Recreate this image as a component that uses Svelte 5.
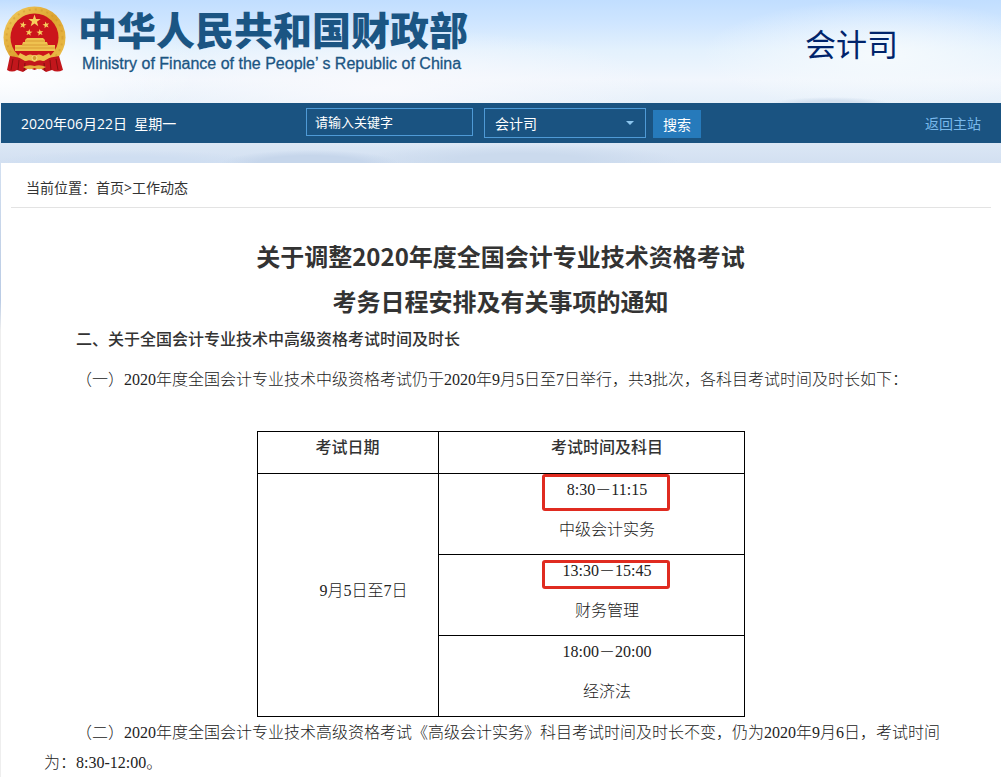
<script>
  const star = (cx, cy, r, turn = 0) =>
    Array.from({ length: 10 }, (_, i) => {
      const a = ((turn + i * 36 - 90) * Math.PI) / 180;
      const d = i % 2 ? r * 0.4 : r;
      return `${(cx + d * Math.cos(a)).toFixed(2)},${(cy + d * Math.sin(a)).toFixed(2)}`;
    }).join(' ');

  const stars = [
    star(31.5, 15, 6.5),
    star(20, 19, 3.6, 12),
    star(43, 19, 3.6, -12),
    star(26, 26.5, 3.6, 8),
    star(37, 26.5, 3.6, -8)
  ];

  const sessions = [
    { time: '8:30－11:15', subject: '中级会计实务', mark: 'tall' },
    { time: '13:30－15:45', subject: '财务管理', mark: 'short' },
    { time: '18:00－20:00', subject: '经济法', mark: '' }
  ];
</script>

<div class="page">
  <header class="banner">
    <svg class="emblem" viewBox="0 0 64 68" aria-hidden="true">
      <defs>
        <linearGradient id="gold" x1="0" y1="0" x2="1" y2="1">
          <stop offset="0" stop-color="#f3cf62" />
          <stop offset="0.5" stop-color="#dda32f" />
          <stop offset="1" stop-color="#f0c650" />
        </linearGradient>
      </defs>
      <circle cx="31.5" cy="31.5" r="31" fill="url(#gold)" />
      <circle cx="31.5" cy="31.5" r="28" fill="none" stroke="#c78722" stroke-width="2" stroke-dasharray="2 4" opacity="0.35" />
      <circle cx="31.5" cy="31.5" r="24" fill="#cb141b" />
      {#each stars as points}
        <polygon {points} fill="#f6cf5d" />
      {/each}
      <path d="M22 34 L24 32 H40 L42 34 V36 H44 L45 39 H52 V45 H12 V39 H19 L20 36 H22Z" fill="#efc250" />
      <path d="M22 35 H42 M19 39 H45 M12 42 H52" stroke="#c98424" stroke-width="0.6" />
      <path d="M7 50 L18 52 L23 55 L31.5 53 L40 55 L45 52 L56 50 L60 64 Q54 67 49 64 L43 66 L37 62 L31.5 64 L26 62 L20 66 L14 64 Q9 67 4 64Z" fill="#c2161c" />
      <path d="M10 53 L8 64 M16 54 L15 64 M22 57 L21 65 M41 57 L42 65 M47 54 L48 64 M53 53 L55 64" stroke="#86100f" stroke-width="1" />
      <path d="M17 47 L23 50 Q27 47 31.5 50 Q36 47 40 50 L46 47 L48 51 L41 55 Q36 53 31.5 56 Q27 53 22 55 L15 51Z" fill="#edbf4d" />
      <path d="M20 61 Q26 58 31.5 60 Q37 58 43 61 Q37 65 31.5 62 Q26 65 20 61Z" fill="#e3ad3c" />
      <circle cx="31.5" cy="52" r="2.5" fill="#d39a30" stroke="#f8dc80" />
    </svg>
    <div class="brand">
      <div class="name">中华人民共和国财政部</div>
      <div class="english">Ministry of Finance of the People’ s Republic of China</div>
    </div>
    <div class="department">会计司</div>
  </header>

  <div class="toolbar">
    <div class="date">2020年06月22日&nbsp; 星期一</div>
    <form class="search" onsubmit={(e) => e.preventDefault()}>
      <input type="text" placeholder="请输入关键字" aria-label="请输入关键字" />
      <div class="picker">
        <select aria-label="会计司">
          <option>会计司</option>
        </select>
        <svg viewBox="0 0 8 4" aria-hidden="true"><path d="M0 0H8L4 4Z" fill="#8cc5ee" /></svg>
      </div>
      <button type="submit">搜索</button>
    </form>
    <a class="back" href="#top">返回主站</a>
  </div>

  <main>
    <nav>当前位置：<a href="#home">首页</a>&gt;<a href="#news">工作动态</a></nav>
    <article>
      <h1>关于调整2020年度全国会计专业技术资格考试<br />考务日程安排及有关事项的通知</h1>
      <h2>二、关于全国会计专业技术中高级资格考试时间及时长</h2>
      <p class="intro">（一）2020年度全国会计专业技术中级资格考试仍于2020年9月5日至7日举行，共3批次，各科目考试时间及时长如下：</p>
      <table>
        <thead>
          <tr><th class="day">考试日期</th><th class="indent">考试时间及科目</th></tr>
        </thead>
        <tbody>
          {#each sessions as s, i}
            <tr>
              {#if i === 0}
                <td class="indent" rowspan="3"><div>9月5日至7日</div></td>
              {/if}
              <td class="indent">
                <div class="time">{s.time}{#if s.mark}<span class="mark {s.mark}"></span>{/if}</div>
                <div>{s.subject}</div>
              </td>
            </tr>
          {/each}
        </tbody>
      </table>
      <p class="note">（二）2020年度全国会计专业技术高级资格考试《高级会计实务》科目考试时间及时长不变，仍为2020年9月6日，考试时间为：8:30-12:00。</p>
    </article>
  </main>
</div>

<style>
  :global(body) {
    margin: 0;
    background: #fff;
  }

  .page {
    box-sizing: border-box;
    padding-left: 1px;
    color: #333;
    font: 14px/20px "Open Sans", "Noto Sans CJK SC", sans-serif;
    text-spacing-trim: space-all;
    background:
      radial-gradient(ellipse 90px 14px at 310px 164px, #c6d6eb 0 60%, transparent),
      radial-gradient(ellipse 140px 14px at 130px 164px, #cfdef1 0 50%, transparent),
      radial-gradient(ellipse 160px 16px at 520px 160px, #cbdaed 0 40%, transparent),
      radial-gradient(ellipse 60px 7px at 83% 104px, #d3e0ef 0 50%, transparent),
      radial-gradient(ellipse 180px 55px at 88% 55px, #f5fafd, transparent),
      radial-gradient(ellipse 280px 60px at 38% 88px, #f8f9fd, transparent),
      radial-gradient(ellipse 200px 70px at 0 70px, #fff, transparent),
      linear-gradient(#c1deff 0, #cee5ff 22px, #e3f1fd 50px, #f1f6fd 80px, #e6f0fa 103px, #dae6f5 145px, #d3e0f1 163px, #c4d3e8 240px, #b9cbe5 300px, #eee 330px);
  }

  .banner {
    display: flex;
    align-items: flex-start;
    height: 103px;
  }

  .emblem {
    width: 64px;
    height: 68px;
    margin: 6px 0 0 2px;
  }

  .brand {
    margin: 4px 0 0 11px;
    color: #1b5583;
  }

  .name {
    font: 900 39px/48px "Noto Sans CJK SC", sans-serif;
  }

  .english {
    padding: 2px 0 0 4px;
    font: 16px/20px "Liberation Sans", sans-serif;
    -webkit-text-stroke: 0.3px #1b5583;
  }

  .department {
    margin: 19px 103px 0 auto;
    color: #00246b;
    font: 31px/48px "Noto Sans CJK SC", sans-serif;
  }

  .toolbar {
    display: grid;
    grid-template-columns: 305px auto 1fr;
    align-items: center;
    height: 40px;
    background: #1a5381;
    color: #fff;
  }

  .date {
    padding: 2px 0 0 20px;
  }

  .search {
    display: flex;
    align-items: flex-start;
    height: 30px;
  }

  input,
  select,
  button {
    box-sizing: border-box;
    margin: 0;
    border: 1px solid #4f9ad6;
    border-radius: 0;
    background: #1a5381;
    color: #fff;
    font: 14px/20px "Noto Sans CJK SC", sans-serif;
  }

  input {
    width: 167px;
    height: 28px;
    padding: 0 8px 2px;
    font-size: 13px;
  }

  input::placeholder {
    color: #fff;
    opacity: 1;
  }

  .picker {
    position: relative;
    margin: 0 7px 0 11px;
  }

  .picker svg {
    position: absolute;
    top: 13px;
    right: 12px;
    width: 8px;
    height: 4px;
    pointer-events: none;
  }

  select {
    display: block;
    width: 162px;
    height: 30px;
    padding: 0 10px;
    appearance: none;
  }

  button {
    width: 48px;
    height: 28px;
    margin-top: 2px;
    padding: 0;
    border: 0;
    background: #267abb;
  }

  .back {
    justify-self: end;
    padding-top: 2px;
    margin-right: 20px;
    color: #79b9ec;
    text-decoration: none;
  }

  main {
    margin-top: 20px;
    padding-bottom: 1px;
    background: #fff;
  }

  nav {
    margin: 0 10px;
    padding: 15px 15px 9px;
    border-bottom: 1px solid #e3e3e3;
  }

  nav a {
    color: inherit;
    text-decoration: none;
  }

  article {
    padding: 25px 44px 0 43px;
    font: 16px/30px "Liberation Serif", "Noto Sans CJK SC", serif;
  }

  h1 {
    margin: 0;
    font: bold 24px/45px "Noto Sans CJK SC", sans-serif;
    text-align: center;
  }

  h2 {
    margin: 0;
    padding-left: 32px;
    font: 500 16px/30px "Noto Sans CJK SC", sans-serif;
  }

  p {
    margin: 0;
    padding-right: 2px;
    text-indent: 32px;
    color: #222;
    font-weight: 300;
  }

  .intro {
    margin: 12px 0 36px;
  }

  .note {
    margin-top: 1px;
  }

  table {
    width: 488px;
    margin: 0 auto;
    border-collapse: collapse;
    table-layout: fixed;
    font-size: 16px;
    line-height: 32px;
    text-align: center;
  }

  th,
  td {
    padding: 0 0 9px;
    border: 1px solid #000;
  }

  th {
    font-weight: 500;
  }

  td {
    padding: 0;
    color: #222;
    font-weight: 300;
  }

  td > div {
    padding-bottom: 8px;
  }

  .day {
    width: 180px;
  }

  .indent {
    text-indent: 32px;
  }

  .time {
    position: relative;
  }

  .mark {
    position: absolute;
    left: calc(50% + 15px);
    box-sizing: border-box;
    width: 128px;
    border: 3px solid #e02b20;
    border-radius: 3px;
    transform: translateX(-50%);
  }

  .tall {
    top: 0;
    height: 37px;
  }

  .short {
    top: 5px;
    height: 29px;
  }
</style>
